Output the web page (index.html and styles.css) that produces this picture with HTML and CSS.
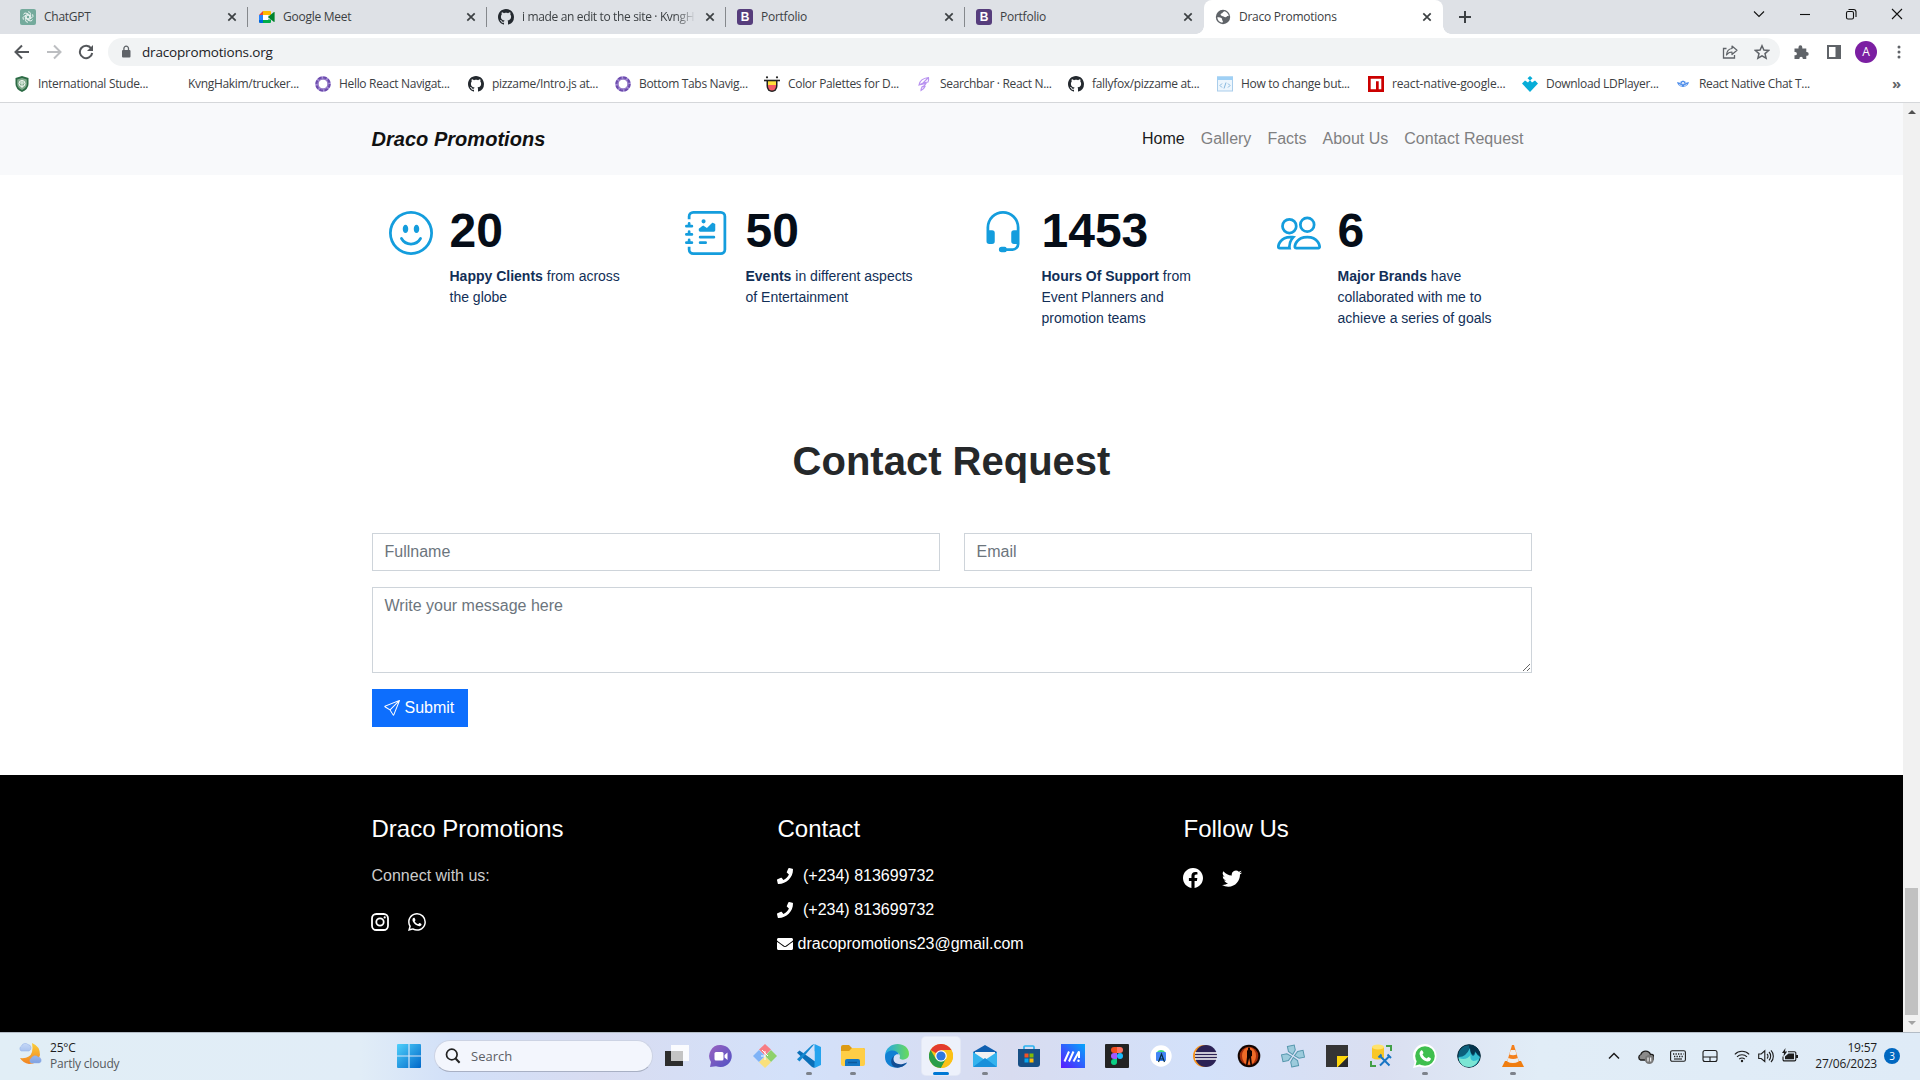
FILE: index.html
```html
<!DOCTYPE html>
<html lang="en">
<head>
<meta charset="utf-8">
<title>Draco Promotions</title>
<link rel="stylesheet" href="styles.css">
</head>
<body>
<svg class="defs" width="0" height="0">
<defs>
<symbol id="github" viewBox="0 0 16 16"><path fill="#24292f" d="M8 0C3.58 0 0 3.58 0 8c0 3.54 2.29 6.53 5.47 7.59.4.07.55-.17.55-.38 0-.19-.01-.82-.01-1.49-2.01.37-2.53-.49-2.69-.94-.09-.23-.48-.94-.82-1.13-.28-.15-.68-.52-.01-.53.63-.01 1.08.58 1.23.82.72 1.21 1.87.87 2.33.66.07-.52.28-.87.51-1.07-1.78-.2-3.64-.89-3.64-3.95 0-.87.31-1.59.82-2.15-.08-.2-.36-1.02.08-2.12 0 0 .67-.21 2.2.82.64-.18 1.32-.27 2-.27.68 0 1.36.09 2 .27 1.53-1.04 2.2-.82 2.2-.82.44 1.1.16 1.92.08 2.12.51.56.82 1.27.82 2.15 0 3.07-1.87 3.75-3.65 3.95.29.25.54.73.54 1.48 0 1.07-.01 1.93-.01 2.2 0 .21.15.46.55.38A8.012 8.012 0 0 0 16 8c0-4.42-3.58-8-8-8z"/></symbol>
<symbol id="x" viewBox="0 0 16 16"><path d="M4.300 4.300l7.400 7.400M11.700 4.300l-7.400 7.400" stroke="#3c4043" stroke-width="1.700"/></symbol>
<symbol id="ring" viewBox="0 0 16 16"><circle cx="8" cy="8" r="6.300" fill="none" stroke="#a58cd6" stroke-width="3"/><circle cx="8" cy="8" r="6.600" fill="none" stroke="#6b4bab" stroke-width="2" stroke-dasharray="3.600 1.580"/><circle cx="8" cy="8" r="4.900" fill="none" stroke="#7b5bb5" stroke-width=".8"/></symbol>
<symbol id="phone" viewBox="0 0 512 512"><path fill="#fff" d="M493.4 24.6l-104-24c-11.3-2.6-22.9 3.3-27.5 13.9l-48 112c-4.2 9.8-1.4 21.3 6.9 28l60.6 49.6c-36 76.7-98.9 140.5-177.2 177.2l-49.6-60.6c-6.8-8.3-18.2-11.1-28-6.9l-112 48C3.9 366.5-2 378.1.6 389.4l24 104C27.1 504.2 36.7 512 48 512c256.1 0 464-207.5 464-464 0-11.2-7.7-20.9-18.6-23.4z"/></symbol>
<symbol id="whatsapp" viewBox="0 0 16 16"><path fill="#fff" d="M13.601 2.326A7.854 7.854 0 0 0 7.994 0C3.627 0 .068 3.558.064 7.926c0 1.399.366 2.76 1.057 3.965L0 16l4.204-1.102a7.933 7.933 0 0 0 3.79.965h.004c4.368 0 7.926-3.558 7.93-7.93A7.898 7.898 0 0 0 13.6 2.326zM7.994 14.521a6.573 6.573 0 0 1-3.356-.92l-.24-.144-2.494.654.666-2.433-.156-.251a6.56 6.56 0 0 1-1.007-3.505c0-3.626 2.957-6.584 6.591-6.584a6.56 6.56 0 0 1 4.66 1.931 6.557 6.557 0 0 1 1.928 4.66c-.004 3.639-2.961 6.592-6.592 6.592zm3.615-4.934c-.197-.099-1.17-.578-1.353-.646-.182-.065-.315-.099-.445.099-.133.197-.513.646-.627.775-.114.133-.232.148-.43.05-.197-.1-.836-.308-1.592-.985-.59-.525-.985-1.175-1.103-1.372-.114-.198-.011-.304.088-.403.087-.088.197-.232.296-.346.1-.114.133-.198.198-.33.065-.134.034-.248-.015-.347-.05-.099-.445-1.076-.612-1.47-.16-.389-.323-.335-.445-.34-.114-.007-.247-.007-.38-.007a.729.729 0 0 0-.529.247c-.182.198-.691.677-.691 1.654 0 .977.71 1.916.81 2.049.098.133 1.394 2.132 3.383 2.992.47.205.84.326 1.129.418.475.152.904.129 1.246.08.38-.058 1.171-.48 1.338-.943.164-.464.164-.86.114-.943-.049-.084-.182-.133-.38-.232z"/></symbol>
</defs>
</svg>

<header class="tabs">
  <div class="tab">
    <svg class="i16" viewBox="0 0 16 16"><rect width="16" height="16" rx="2" fill="#74aa9c"/><g fill="none" stroke="#fff" stroke-width=".8"><path id="petal" d="M8 2.700a2.600 2.600 0 0 1 2.600 2.600v3.200L8 10"/><use href="#petal" transform="rotate(60 8 8)"/><use href="#petal" transform="rotate(120 8 8)"/><use href="#petal" transform="rotate(180 8 8)"/><use href="#petal" transform="rotate(240 8 8)"/><use href="#petal" transform="rotate(300 8 8)"/></g></svg>
    <span class="tab-title">ChatGPT</span><svg class="i16"><use href="#x"/></svg>
  </div>
  <div class="tab">
    <svg class="i16" viewBox="0 0 16 16"><path d="M4 2h7a1 1 0 0 1 1 1v3H4z" fill="#ffba00"/><path d="M4 2v4H0z" fill="#ea4335"/><path d="M0 6h4v5H0z" fill="#2684fc"/><path d="M0 11h4v3H1a1 1 0 0 1-1-1z" fill="#0066da"/><path d="M4 10.500h8V13a1 1 0 0 1-1 1H4z" fill="#00ac47"/><path d="M8.800 8L15 3q.6-.3.6.4v9.200q0 .7-.6.4z" fill="#00832d"/><path d="M4 6h5v5H4z" fill="#fff"/></svg>
    <span class="tab-title">Google Meet</span><svg class="i16"><use href="#x"/></svg>
  </div>
  <div class="tab">
    <svg class="i16"><use href="#github"/></svg>
    <span class="tab-title fade">i made an edit to the site · KvngH</span><svg class="i16"><use href="#x"/></svg>
  </div>
  <div class="tab">
    <span class="boot">B</span>
    <span class="tab-title">Portfolio</span><svg class="i16"><use href="#x"/></svg>
  </div>
  <div class="tab last">
    <span class="boot">B</span>
    <span class="tab-title">Portfolio</span><svg class="i16"><use href="#x"/></svg>
  </div>
  <div class="tab active">
    <svg class="i16" viewBox="0 0 16 16"><circle cx="8" cy="8" r="7.200" fill="#5f6368"/><path d="M2.300 8.200c2 .1 4 .3 4.600 1.300s-.3 1.700.6 2.100c.8.500.4 1.500-.2 2.100A6 6 0 0 1 2.300 8.200zM6.300 4.600c1.300.2 1.300-2 3.300-2.300 2.300.7 3.900 2.700 4.200 5-.8-.3-1.500-.5-2 .3-.6 1-2.300.7-3.200 0C7.900 7 6 7 5.700 6c-.1-.7 0-1.300.6-1.400z" fill="#fff"/></svg>
    <span class="tab-title">Draco Promotions</span><svg class="i16"><use href="#x"/></svg>
  </div>
  <svg class="newtab" viewBox="0 0 14 14"><path d="M7 1v12M1 7h12" stroke="#3c4043" stroke-width="2"/></svg>
  <div class="winbtns">
    <svg viewBox="0 0 12 12"><path d="M1 3.500l5 5 5-5" /></svg>
    <svg viewBox="0 0 12 12"><path d="M1 6.500h10"/></svg>
    <svg viewBox="0 0 12 12"><rect x="1.500" y="3.500" width="7" height="7.500" rx="1.500"/><path d="M3.500 1.500h5a2.500 2.500 0 0 1 2.500 2.500v5"/></svg>
    <svg viewBox="0 0 12 12"><path d="M1 1l10 10M11 1L1 11"/></svg>
  </div>
</header>

<div class="toolbar">
  <div class="navbtns">
    <svg class="i16" viewBox="0 0 16 16"><path d="M15 8H2M8 1.500L1.500 8 8 14.500" fill="none" stroke="#54575b" stroke-width="2"/></svg>
    <svg class="i16" viewBox="0 0 16 16"><path d="M1 8h13M8 1.500L14.500 8 8 14.500" fill="none" stroke="#bcbec1" stroke-width="2"/></svg>
    <svg class="i16" viewBox="0 0 16 16"><path d="M13.200 4.500A6.200 6.200 0 1 0 14.200 9" fill="none" stroke="#54575b" stroke-width="2"/><path d="M15 1v6H9z" fill="#54575b"/></svg>
  </div>
  <div class="omnibox">
    <svg class="lock" viewBox="0 0 10 13"><rect x="1" y="4.500" width="8.500" height="7.500" rx="1" fill="#5f6368"/><path d="M2.900 5V3a2.300 2.300 0 0 1 4.600 0v2" fill="none" stroke="#5f6368" stroke-width="1.300"/></svg>
    <span class="url">dracopromotions.org</span>
    <svg class="i16" viewBox="0 0 16 16"><path d="M4.500 4.500H1.500v9.500h11v-3" fill="none" stroke="#5f6368" stroke-width="1.300"/><path d="M10 2l5 4.300-5 4.200V8Q6.500 8 4.500 11 5 5 10 4.500z" fill="none" stroke="#5f6368" stroke-width="1.200" stroke-linejoin="round"/></svg>
    <svg class="i16" viewBox="0 0 16 16"><path d="M8 1.800l1.900 4.300 4.700.4-3.600 3.100 1.100 4.600L8 11.800l-4.100 2.400L5 9.600 1.400 6.500l4.700-.4z" fill="none" stroke="#5f6368" stroke-width="1.500"/></svg>
  </div>
  <div class="actions">
    <svg class="i16" viewBox="0 0 16 16"><path d="M1.500 4.500h4V3.200a1.900 1.900 0 0 1 3.800 0v1.300h4V8h.5a1.900 1.900 0 0 1 0 3.800h-.5V15H9.800v-.6a1.700 1.700 0 0 0-3.400 0v.6H1.500v-3.700h.8a1.600 1.600 0 0 0 0-3.200h-.8z" fill="#5f6368"/></svg>
    <svg class="i16" viewBox="0 0 16 16"><path fill-rule="evenodd" d="M1 1h14v14H1zM3 3v10h6.500V3z" fill="#5f6368"/></svg>
    <span class="avatar">A</span>
    <svg class="i16" viewBox="0 0 16 16"><g fill="#5f6368"><circle cx="8" cy="3" r="1.500"/><circle cx="8" cy="8" r="1.500"/><circle cx="8" cy="13" r="1.500"/></g></svg>
  </div>
</div>

<nav class="bookmarks">
  <a class="bm"><svg class="i16" viewBox="0 0 16 16"><path d="M8 0l6.500 2v6q0 5-6.500 8-6.500-3-6.500-8V2z" fill="#2c6b45"/><path d="M8 2l4.800 1.500V8q0 3.700-4.800 6-4.800-2.300-4.800-6V3.500z" fill="#7fa98a"/><circle cx="8" cy="7.500" r="3" fill="none" stroke="#fff"/><path d="M8 4v8M6 7h4" stroke="#e6f1e8"/></svg><span>International Stude...</span></a>
  <a class="bm"><i class="i16"></i><span>KvngHakim/trucker...</span></a>
  <a class="bm"><svg class="i16"><use href="#ring"/></svg><span>Hello React Navigat...</span></a>
  <a class="bm"><svg class="i16"><use href="#github"/></svg><span>pizzame/Intro.js at...</span></a>
  <a class="bm"><svg class="i16"><use href="#ring"/></svg><span>Bottom Tabs Navig...</span></a>
  <a class="bm"><svg class="i16" viewBox="0 0 16 16"><path d="M2.500 4h11v6a5.500 6 0 0 1-11 0z" fill="#222"/><path d="M4 5h8v4H4z" fill="#ffe03a"/><path d="M4 9h8v1a4 4.500 0 0 1-8 0z" fill="#f35b64"/><path d="M0 4.500h16" stroke="#222" stroke-width="1.600"/><circle cx="3" cy="1.300" r="1.100" fill="#222"/><circle cx="13" cy="1.300" r="1.100" fill="#222"/></svg><span>Color Palettes for D...</span></a>
  <a class="bm"><svg class="i16" viewBox="0 0 16 16"><path d="M12.500 1.500Q4 2.500 3 9l4-2 5-1q1-2 .5-4.500zM3 9l7-1.500q-1 2.500-4.500 3.500M6 11l3-.5Q8 13 5 14.500q0-2 1-3.500zM7 7l5-5" fill="none" stroke="#b892f0" stroke-width="1.100"/></svg><span>Searchbar · React N...</span></a>
  <a class="bm"><svg class="i16"><use href="#github"/></svg><span>fallyfox/pizzame at...</span></a>
  <a class="bm"><svg class="i16" viewBox="0 0 16 16"><rect x=".5" y="1" width="15" height="14" fill="#edf6fd" stroke="#a9cdeb"/><path d="M0 .5h16V4H0z" fill="#9fd0f5"/><path d="M5 7.500L3 9.500l2 2M11 7.500l2 2-2 2M9 6.500l-2 6" fill="none" stroke="#85b7dd"/></svg><span>How to change but...</span></a>
  <a class="bm wide"><svg class="i16" viewBox="0 0 16 16"><path d="M0 0h16v16H0z" fill="#cb0000"/><path d="M2.700 2.700h10.600v10.600H10.700v-8H8v8H2.700z" fill="#fff"/></svg><span>react-native-google...</span></a>
  <a class="bm"><svg class="i16" viewBox="0 0 16 16"><path d="M8 0l2.500 2.300L8 4.600 5.500 2.300zM8 4l2 2.500 3-2 3 3L8 16 0 7.500l3-3 3 2z" fill="#07add8"/></svg><span>Download LDPlayer...</span></a>
  <a class="bm"><svg class="i16" viewBox="0 0 16 16"><path d="M2 6q3 0 6 3 3-3 6-3-1 4.500-6 5Q3 10.500 2 6zM5 6l3-1.500L11 6 8 9z" fill="#4d8dea"/><circle cx="8" cy="7" r="1" fill="#fff"/><path d="M4 8.500l3 1.500M12 8.500L9 10" stroke="#fff" stroke-width=".7"/></svg><span>React Native Chat T...</span></a>
  <b class="more">»</b>
</nav>

<div class="viewport">
  <div class="page">
    <nav class="site-nav">
      <div class="wrap nav-row">
        <a class="brand">Draco Promotions</a>
        <div class="links"><a class="on">Home</a><a>Gallery</a><a>Facts</a><a>About Us</a><a>Contact Request</a></div>
      </div>
    </nav>
    <section class="counts">
      <div class="count"><svg viewBox="0 0 16 16"><path d="M8 15A7 7 0 1 1 8 1a7 7 0 0 1 0 14zm0 1A8 8 0 1 0 8 0a8 8 0 0 0 0 16z"/><path d="M4.285 9.567a.5.5 0 0 1 .683.183A3.498 3.498 0 0 0 8 11.500a3.498 3.498 0 0 0 3.032-1.750.5.5 0 1 1 .866.5A4.498 4.498 0 0 1 8 12.500a4.498 4.498 0 0 1-3.898-2.250.5.5 0 0 1 .183-.683zM7 6.500C7 7.328 6.552 8 6 8s-1-.672-1-1.500S5.448 5 6 5s1 .672 1 1.500zm4 0c0 .828-.448 1.500-1 1.500s-1-.672-1-1.500S9.448 5 10 5s1 .672 1 1.500z"/></svg><div><strong class="num">20</strong><p><b>Happy Clients</b> from across the globe</p></div></div>
      <div class="count"><svg viewBox="0 0 16 16"><path d="M7.500 3.750a.75.75 0 1 1-1.500 0 .75.75 0 0 1 1.500 0zm-.861 1.542 1.330.886 1.854-1.855a.25.25 0 0 1 .289-.047L11 4.750V7a.5.5 0 0 1-.5.5h-5A.5.5 0 0 1 5 7v-.5s1.540-1.274 1.639-1.208zM5 9.500a.5.5 0 0 1 .5-.5h5a.5.5 0 0 1 0 1h-5a.5.5 0 0 1-.5-.5zm0 2a.5.5 0 0 1 .5-.5h2a.5.5 0 0 1 0 1h-2a.5.5 0 0 1-.5-.5z"/><path d="M3 0h10a2 2 0 0 1 2 2v12a2 2 0 0 1-2 2H3a2 2 0 0 1-2-2v-1h1v1a1 1 0 0 0 1 1h10a1 1 0 0 0 1-1V2a1 1 0 0 0-1-1H3a1 1 0 0 0-1 1v1H1V2a2 2 0 0 1 2-2z"/><path d="M1 5v-.5a.5.5 0 0 1 1 0V5h.5a.5.5 0 0 1 0 1h-2a.5.5 0 0 1 0-1H1zm0 3v-.5a.5.5 0 0 1 1 0V8h.5a.5.5 0 0 1 0 1h-2a.5.5 0 0 1 0-1H1zm0 3v-.5a.5.5 0 0 1 1 0v.5h.5a.5.5 0 0 1 0 1h-2a.5.5 0 0 1 0-1H1z"/></svg><div><strong class="num">50</strong><p><b>Events</b> in different aspects of Entertainment</p></div></div>
      <div class="count"><svg viewBox="0 0 16 16"><path d="M8 1a5 5 0 0 0-5 5v1h1a1 1 0 0 1 1 1v3a1 1 0 0 1-1 1H3a1 1 0 0 1-1-1V6a6 6 0 1 1 12 0v6a2.500 2.500 0 0 1-2.500 2.500H9.366a1 1 0 0 1-.866.5h-1a1 1 0 1 1 0-2h1a1 1 0 0 1 .866.5H11.500A1.500 1.500 0 0 0 13 12h-1a1 1 0 0 1-1-1V8a1 1 0 0 1 1-1h1V6a5 5 0 0 0-5-5z"/></svg><div><strong class="num">1453</strong><p><b>Hours Of Support</b> from Event Planners and promotion teams</p></div></div>
      <div class="count"><svg viewBox="0 0 16 16"><path d="M15 14s1 0 1-1-1-4-5-4-5 3-5 4 1 1 1 1h8zm-7.978-1A.261.261 0 0 1 7 12.996c.001-.264.167-1.030.76-1.720C8.312 10.629 9.282 10 11 10c1.717 0 2.687.63 3.240 1.276.593.69.758 1.457.76 1.720l-.008.002a.274.274 0 0 1-.014.002H7.022zM11 7a2 2 0 1 0 0-4 2 2 0 0 0 0 4zm3-2a3 3 0 1 1-6 0 3 3 0 0 1 6 0zM6.936 9.280a5.880 5.880 0 0 0-1.230-.247A7.350 7.350 0 0 0 5 9c-4 0-5 3-5 4 0 .667.333 1 1 1h4.216A2.238 2.238 0 0 1 5 13c0-1.010.377-2.042 1.090-2.904.243-.294.526-.569.846-.816zM4.920 10A5.493 5.493 0 0 0 4 13H1c0-.26.164-1.030.76-1.724.545-.636 1.492-1.256 3.160-1.275zM1.500 5.500a3 3 0 1 1 6 0 3 3 0 0 1-6 0zm3-2a2 2 0 1 0 0 4 2 2 0 0 0 0-4z"/></svg><div><strong class="num">6</strong><p><b>Major Brands</b> have collaborated with me to achieve a series of goals</p></div></div>
    </section>
    <section class="contact wrap">
      <h2>Contact Request</h2>
      <form class="form">
        <div class="pair"><input placeholder="Fullname"><input placeholder="Email"></div>
        <textarea placeholder="Write your message here"></textarea>
        <button type="button" class="submit"><svg class="i16" viewBox="0 0 16 16"><path fill="#fff" d="M15.854.146a.5.5 0 0 1 .11.54l-5.819 14.547a.75.75 0 0 1-1.329.124l-3.178-4.995L.643 7.184a.75.75 0 0 1 .124-1.330L15.314.037a.5.5 0 0 1 .54.11ZM6.636 10.070l2.761 4.338L14.130 2.576 6.636 10.070Zm6.787-8.201L1.591 6.602l4.339 2.760 7.494-7.493Z"/></svg><span>Submit</span></button>
      </form>
    </section>
    <footer class="foot">
      <div class="wrap foot-cols">
        <div><h4>Draco Promotions</h4><p class="muted">Connect with us:</p>
          <div class="social left"><svg viewBox="0 0 18 18"><rect x="1" y="1" width="16" height="16" rx="4.300" fill="none" stroke="#fff" stroke-width="1.800"/><circle cx="9" cy="9" r="3.700" fill="none" stroke="#fff" stroke-width="1.800"/><circle cx="13.700" cy="4.400" r="1.100" fill="#fff"/></svg><svg><use href="#whatsapp"/></svg></div>
        </div>
        <div><h4>Contact</h4>
          <p class="line"><svg class="i16"><use href="#phone"/></svg><span class="tel">(+234) 813699732</span></p>
          <p class="line"><svg class="i16"><use href="#phone"/></svg><span class="tel">(+234) 813699732</span></p>
          <p class="line"><svg class="i16" viewBox="0 0 512 512"><path fill="#fff" d="M502.300 190.800c3.900-3.100 9.700-.2 9.700 4.700V400c0 26.500-21.500 48-48 48H48c-26.500 0-48-21.500-48-48V195.600c0-5 5.700-7.800 9.700-4.700 22.400 17.400 52.100 39.500 154.100 113.600 21.100 15.400 56.700 47.800 92.200 47.600 35.700.3 72-32.800 92.300-47.600 102-74.100 131.600-96.300 154-113.700zM256 320c23.200.4 56.600-29.200 73.400-41.400 132.700-96.300 142.800-104.700 173.400-128.700 5.800-4.500 9.200-11.500 9.200-18.900v-19c0-26.500-21.500-48-48-48H48c-26.500 0-48 21.500-48 48v19c0 7.400 3.400 14.300 9.200 18.900 30.600 23.900 40.700 32.400 173.400 128.700 16.800 12.200 50.200 41.800 73.400 41.400z"/></svg><span class="mail">dracopromotions23@gmail.com</span></p>
        </div>
        <div><h4>Follow Us</h4>
          <div class="social right"><svg viewBox="0 0 16 16"><path fill="#fff" d="M16 8.049c0-4.446-3.582-8.050-8-8.050C3.580 0-.002 3.603-.002 8.050c0 4.017 2.926 7.347 6.750 7.951v-5.625h-2.030V8.050H6.750V6.275c0-2.017 1.195-3.131 3.022-3.131.876 0 1.791.157 1.791.157v1.980h-1.009c-.993 0-1.303.621-1.303 1.258v1.510h2.218l-.354 2.326H9.250V16c3.824-.604 6.750-3.934 6.750-7.951z"/></svg><svg viewBox="0 0 16 16"><path fill="#fff" d="M5.026 15c6.038 0 9.341-5.003 9.341-9.334 0-.14 0-.282-.006-.422A6.685 6.685 0 0 0 16 3.542a6.658 6.658 0 0 1-1.889.518 3.301 3.301 0 0 0 1.447-1.817 6.533 6.533 0 0 1-2.087.793A3.286 3.286 0 0 0 7.875 6.030a9.325 9.325 0 0 1-6.767-3.429 3.289 3.289 0 0 0 1.018 4.382A3.323 3.323 0 0 1 .64 6.575v.045a3.288 3.288 0 0 0 2.632 3.218 3.203 3.203 0 0 1-.865.115 3.230 3.230 0 0 1-.614-.057 3.283 3.283 0 0 0 3.067 2.277A6.588 6.588 0 0 1 .78 13.580a6.320 6.320 0 0 1-.78-.045A9.344 9.344 0 0 0 5.026 15z"/></svg></div>
        </div>
      </div>
    </footer>
  </div>
  <div class="scrollbar"><i class="up"></i><i class="thumb"></i><i class="down"></i></div>
</div>

<div class="taskbar">
  <div class="weather">
    <svg viewBox="0 0 24 24"><defs><linearGradient id="moon" x2="0" y2="1"><stop stop-color="#fbcf3a"/><stop offset="1" stop-color="#f28322"/></linearGradient><linearGradient id="cl" x2="0" y2="1"><stop stop-color="#c5d8f7"/><stop offset="1" stop-color="#7fa2e2"/></linearGradient></defs><path d="M14 2q8 3 8 12-2 9-11 9-6-1-9-6 10 1 12-6 1-4 0-9z" fill="url(#moon)"/><path d="M3 10a3 3 0 0 1 .5-5A4 4 0 0 1 10 3.500a3.400 3.400 0 0 1 1 6.500zM13 22a3 3 0 0 1 .5-5A4 4 0 0 1 20 16a3.200 3.200 0 0 1 1.500 6z" fill="url(#cl)" stroke="#8fade6" stroke-width=".5"/></svg>
    <div><span class="temp">25°C</span><span class="cond">Partly cloudy</span></div>
  </div>
  <div class="apps">
    <svg class="start" viewBox="0 0 24 24"><defs><linearGradient id="win" x2="1" y2="1"><stop stop-color="#4fd0fb"/><stop offset="1" stop-color="#0067c9"/></linearGradient></defs><path d="M0 1a1 1 0 0 1 1-1h10.400v11.400H0zM12.600 0H23a1 1 0 0 1 1 1v10.400H12.600zM0 12.600h11.400V24H1a1 1 0 0 1-1-1zM12.600 12.600H24V23a1 1 0 0 1-1 1H12.600z" fill="url(#win)"/></svg>
    <div class="search"><svg viewBox="0 0 16 16"><circle cx="6.800" cy="6.500" r="5.300" fill="none" stroke="#222" stroke-width="1.700"/><path d="M10.600 10.500l4 4.300" stroke="#222" stroke-width="2"/></svg><span>Search</span></div>
    <span class="app"><svg viewBox="0 0 24 24"><path d="M0 7h18v15H0z" fill="#2d2d2d"/><path d="M6 1h18v16H6z" fill="#fff" fill-opacity=".88"/><path d="M6 7h12v10H6z" fill="#c4c4c4"/></svg></span>
    <span class="app"><svg viewBox="0 0 24 24"><defs><linearGradient id="chat" x2="1" y2="1"><stop stop-color="#9b62c0"/><stop offset="1" stop-color="#4f52c4"/></linearGradient></defs><path d="M12 1a11.500 11 0 1 1-5 21.200L1 23l1-5A11 11 0 0 1 12 1z" fill="url(#chat)"/><rect x="5.500" y="8" width="9" height="8.500" rx="1.500" fill="#fff"/><path d="M15.500 11l3-2.500v7.500l-3-2.500z" fill="#fff"/></svg></span>
    <span class="app"><svg viewBox="0 0 24 24"><g stroke="#fff" stroke-width="1"><path d="M12 0l6 5.500-6 6-6-6z" fill="#f77c83" stroke="none"/><path d="M6 6l6 6-6 6-6-6z" fill="#7fb3f7" stroke="none"/><path d="M18 6l6 6-6 6-6-6z" fill="#8fd16b" stroke="none"/><path d="M12 12.500l6 5.700-6 5.800-6-5.800z" fill="#f9e07c" stroke="none"/><path d="M9 6l6 6M12 7v9M8 12h4" fill="none"/></g></svg></span>
    <span class="app run"><svg viewBox="0 0 24 24"><path d="M2.500 6.500L0 8.800 15 23l2.500 1 1.500-6z" fill="#0a6fb8"/><path d="M17.500 0L2.500 17.500 0 15.200 15 1z" fill="#1488d0"/><path d="M17.500 0L24 3v18l-6.500 3z" fill="#25a3ee"/><path d="M17.500 7v10L11.500 12z" fill="#d3dff7"/></svg></span>
    <span class="app run"><svg viewBox="0 0 24 24"><path d="M0 3a2 2 0 0 1 2-2h6l3 3h11a2 2 0 0 1 2 2v4H0z" fill="#dd9b14"/><path d="M0 7h8l3-3h11a2 2 0 0 1 2 2v14a2 2 0 0 1-2 2H2a2 2 0 0 1-2-2z" fill="#ffce46"/><path d="M4 22v-5a2 2 0 0 1 2-2h11a2 2 0 0 1 2 2v5z" fill="#1477c4"/><path d="M7 18.500h9" stroke="#0c5a9c" stroke-width="1.500"/></svg></span>
    <span class="app"><svg viewBox="0 0 24 24"><defs><linearGradient id="edge"><stop stop-color="#22a5ea"/><stop offset="1" stop-color="#69dc58"/></linearGradient></defs><path d="M0 12C1-4 24-3 24 10c0 6-8 7-9.500 4C17 9 9 6 4 10z" fill="url(#edge)"/><path d="M0 13C0 6 11 4 14 10.500 10 9 7 14 9 18s8 4 13 .5C18 26 0 26 0 13z" fill="#1180d3"/><path d="M9 12c-3 6 4 11 13 6.500C18 24 11 25 8 22c-3-3-2-8 1-10z" fill="#114d94"/></svg></span>
    <span class="app current"><svg viewBox="0 0 24 24"><circle cx="12" cy="12" r="12" fill="#fbc116"/><path d="M12 12L1.600 6A12 12 0 0 1 22.400 6z" fill="#e33b2e"/><path d="M1.600 6A12 12 0 0 0 12 24l5-9H7z" fill="#2a9d4a"/><path d="M22.400 6H12l5 9-5 9A12 12 0 0 0 22.400 6z" fill="#fbc116"/><circle cx="12" cy="12" r="5.800" fill="#fff"/><circle cx="12" cy="12" r="4.600" fill="#2f78e0"/></svg></span>
    <span class="app run"><svg viewBox="0 0 24 24"><path d="M0 8l12-7 12 7v3H0z" fill="#0f5fb0"/><path d="M2 8h20v8H2z" fill="#f2f2f2"/><path d="M0 8l12 8L24 8v14a1 1 0 0 1-1 1H1a1 1 0 0 1-1-1z" fill="#34b3ee"/><path d="M0 23L12 14l12 9z" fill="#1890da"/></svg></span>
    <span class="app"><svg viewBox="0 0 24 24"><path d="M7 6V3q0-1 1-1h8q1 0 1 1v3" fill="none" stroke="#2bb2ef" stroke-width="1.700"/><path d="M1 5h22v15a3 3 0 0 1-3 3H4a3 3 0 0 1-3-3z" fill="#174f85"/><path d="M7.500 9.500h4v4h-4z" fill="#f35325"/><path d="M12.500 9.500h4v4h-4z" fill="#81bc06"/><path d="M7.500 14.500h4v4h-4z" fill="#05a6f0"/><path d="M12.500 14.500h4v4h-4z" fill="#ffba08"/></svg></span>
    <span class="app"><svg viewBox="0 0 24 24"><defs><linearGradient id="ma" x1="0" y1="1" x2="1" y2="0"><stop stop-color="#5a18ff"/><stop offset="1" stop-color="#05a6fb"/></linearGradient></defs><path d="M0 0h24v24H0z" fill="url(#ma)"/><path d="M3.500 17.500l4.500-10M8 17.500l4.500-10M12.500 17.500L18 7.500v6.500" fill="none" stroke="#fff" stroke-width="2"/><circle cx="17.500" cy="16.800" r="1.200" fill="#fff"/></svg></span>
    <span class="app"><svg viewBox="0 0 24 24"><rect width="24" height="24" rx="1" fill="#232323"/><path d="M12 3H9a3 3 0 0 0 0 6h3z" fill="#f24e1e"/><path d="M12 3h3a3 3 0 0 1 0 6h-3z" fill="#ff7262"/><path d="M12 9H9a3 3 0 0 0 0 6h3z" fill="#a259ff"/><circle cx="15" cy="12" r="3" fill="#1abcfe"/><path d="M12 15H9a3 3 0 1 0 3 3z" fill="#0acf83"/></svg></span>
    <span class="app"><svg viewBox="0 0 24 24"><circle cx="12" cy="12" r="10.700" fill="#fff"/><path d="M8 8a4.500 3.500 0 0 1 8 0z" fill="#3ddc84"/><rect x="7" y="8" width="10" height="9" rx="1" fill="#4285f4"/><path d="M9.500 18l3-8 3 8M10.500 15h4" fill="none" stroke="#073042" stroke-width="1.200"/></svg></span>
    <span class="app"><svg viewBox="0 0 24 24"><circle cx="11" cy="12" r="11" fill="#f7941e"/><circle cx="13" cy="12" r="11" fill="#2c2255"/><path d="M2 9h22M2 12h22M2 15h22" stroke="#fff" stroke-width="1.300"/></svg></span>
    <span class="app"><svg viewBox="0 0 24 24"><circle cx="12" cy="12" r="11.300" fill="#120501"/><circle cx="12" cy="12" r="9.300" fill="#a52e0c"/><ellipse cx="12" cy="12" rx="7" ry="8.800" fill="#ef6b27"/><path d="M11 3.500h2v2l2 1.500v5l-1 .5 1 8.500h-1.500l-1.300-7-1.700 7H9l1-8V7l1-1.500z" fill="#140400"/></svg></span>
    <span class="app"><svg viewBox="0 0 24 24"><g fill="#9ccbdc" stroke="#5597ad" stroke-width="1" transform="rotate(-12 12 12)"><path d="M8.500 1.500h7v5L12 10.500 8.500 6.500zM8.500 22.500h7v-5L12 13.500l-3.500 4zM1 8.500v7h5.500l4-3.500-4-3.500zM23 8.500v7h-5.500l-4-3.500 4-3.500z"/></g></svg></span>
    <span class="app"><svg viewBox="0 0 24 24"><path d="M1 1h22v22H1z" fill="#353535"/><path d="M12 12h11v1L13 23h-1z" fill="#ffd60a"/><path d="M23 13v10H13z" fill="#2a2a2a"/></svg></span>
    <span class="app"><svg viewBox="0 0 24 24"><path d="M17 2h5v5M2 17v5h5" fill="none" stroke="#43a047" stroke-width="2"/><path d="M3 3v11q5 3 12 0V3z" fill="#f9c726"/><ellipse cx="9" cy="3" rx="6" ry="2.500" fill="#ffe26b"/><path d="M11 12l9.500 9.500M20.500 12L11 21.500" stroke="#1976c5" stroke-width="2"/><path d="M9.500 13.500l3-3M18.500 10.500l3.500 3.500" stroke="#1976c5" stroke-width="2"/></svg></span>
    <span class="app run"><svg viewBox="0 0 24 24"><path d="M12 0a11.800 11.800 0 1 1-5.500 22.400L0 24l1.700-6A11.800 11.800 0 0 1 12 0z" fill="#fff"/><circle cx="12" cy="12" r="9.800" fill="#3fbf4e"/><path d="M2.500 21.500L4 16l4 4z" fill="#3fbf4e"/><path d="M8 6.500c1-.7 1.700 0 2.500 2.500l-1 1.500q1.300 2.800 4.200 4l1.500-1.500q3 1 2.800 2-1 3-4 2.500Q8 16 6.500 10q0-2.500 1.500-3.500z" fill="#fff"/></svg></span>
    <span class="app"><svg viewBox="0 0 24 24"><circle cx="12" cy="12" r="11.300" fill="#0a5f7c" stroke="#062433"/><path d="M12 1a11 11 0 0 1 11 11q-3-1-5-5 0 2-2 4-4-3-4-10z" fill="#04344c"/><path d="M2 13Q9 13 13 4q0 6 3 8 2-1 2.500-4 2 4 4.500 5-2 9-10 10Q3 22 1.500 13z" fill="#35bdd0"/><path d="M1.500 14q8 3 12-3-1 5 3 6 3 0 5-2-3 8-9.500 8-9 0-10.500-9z" fill="#7be6d4"/></svg></span>
    <span class="app run"><svg viewBox="0 0 24 24"><path d="M4 17h16l3 6H1z" fill="#ef7d0f"/><path d="M11 1h2l5 17q-6 3-12 0z" fill="#f4811c"/><path d="M9.700 6h4.600l1.300 4.500q-3.500 1.500-7.200 0zM7.300 14q5 2 9.400 0l1 3.500q-6 3-11.500 0z" fill="#eee"/></svg></span>
  </div>
  <div class="tray">
    <svg viewBox="0 0 16 16"><path d="M3 10.500L8 5.500l5 5" stroke-width="1.500"/></svg>
    <svg viewBox="0 0 16 16"><path d="M2.500 12a3 3 0 0 1 .3-5.500A5.200 5.200 0 0 1 12.500 6.500 2.800 2.800 0 0 1 14 12z" fill="#8b8b8b" stroke="#1d1d1d" stroke-width="1.300"/><circle cx="11.300" cy="11.500" r="4.500" fill="#777" stroke="none"/><path d="M10 9.500v4M12.700 9.500v4" stroke="#fff"/></svg>
    <svg viewBox="0 0 16 16"><rect x=".6" y="2.800" width="14.800" height="10.400" rx="1.500"/><path d="M3 6h10.500M4 8.500h9" stroke-dasharray="1.300 1.200" stroke-width="1.400"/><path d="M4 11h8"/></svg>
    <svg viewBox="0 0 16 16"><rect x="1" y="2.500" width="14" height="11" rx="2"/><path d="M1 9h14M8 9v4.500"/></svg>
    <svg viewBox="0 0 16 16"><path d="M.8 6.300a10.200 10.200 0 0 1 14.400 0M3 8.800a7.100 7.100 0 0 1 10 0M5.200 11.200a4 4 0 0 1 5.600 0"/><circle cx="8" cy="13" r="1.200" fill="#1d1d1d" stroke="none"/></svg>
    <svg viewBox="0 0 16 16"><path d="M.7 6v4.500h2.500L6.800 13.500V2.800L3.200 6z"/><path d="M9 6a3 3 0 0 1 0 4.500M11 4a6 6 0 0 1 0 8.300M13 2.300a8.500 8.500 0 0 1 0 11.700"/></svg>
    <svg viewBox="0 0 16 16"><path d="M6 3.800h6.500a1.300 1.300 0 0 1 1.300 1.300v6.500a1.300 1.300 0 0 1-1.300 1.300H2.300A1.300 1.300 0 0 1 1 11.600V8.500"/><path d="M6.500 5.500H12v5.800H3V8.500z" fill="#1d1d1d" stroke="none"/><path d="M14 7h2v3h-2zM3.500 0L0 5h2l-.5 3.500L5.200 3.500H3z" fill="#1d1d1d" stroke="none"/></svg>
  </div>
  <div class="clock"><span>19:57</span><span>27/06/2023</span></div>
  <span class="badge">3</span>
</div>
</body>
</html>
```
FILE: styles.css
```css
* { box-sizing: border-box; }
body { margin: 0; width: 1920px; height: 1080px; overflow: hidden; display: flex; flex-direction: column; background: #fff; font-family: "Open Sans", "Noto Sans", sans-serif; color: #3c4043; }
svg { display: block; flex: none; }
.defs { position: absolute; }
.i16 { width: 16px; height: 16px; flex: none; }

/* browser tab strip */
.tabs { flex: none; height: 34px; background: #dee1e6; display: flex; align-items: center; padding-left: 9px; }
.tab { width: 239px; height: 34px; display: flex; align-items: center; padding: 0 8px 0 11px; font-size: 12px; letter-spacing: -0.25px; position: relative; }
.tab-title { flex: 1; margin: 0 6px 1px 8px; white-space: nowrap; overflow: hidden; }
.fade { letter-spacing: -0.35px; -webkit-mask-image: linear-gradient(90deg, #000 88%, transparent); mask-image: linear-gradient(90deg, #000 88%, transparent); }
.tab:not(.active):not(.last)::after { content: ""; position: absolute; right: 0; top: 7px; width: 1px; height: 20px; background: #85888c; }
.boot { width: 16px; height: 16px; flex: none; border-radius: 3px; background: #563d7c; color: #fff; font: bold 12px/16px "Liberation Sans", sans-serif; text-align: center; letter-spacing: 0; }
.active { background: #fff; border-radius: 8px 8px 0 0; }
.active::before, .active::after { content: ""; position: absolute; bottom: 0; width: 8px; height: 8px; }
.active::before { left: -8px; background: radial-gradient(circle at 0 0, transparent 7.500px, #fff 8px); }
.active::after { right: -8px; background: radial-gradient(circle at 100% 0, transparent 7.500px, #fff 8px); }
.newtab { width: 14px; height: 14px; margin-left: 15px; }
.winbtns { margin-left: auto; display: flex; gap: 34px; padding: 0 17px 6px 0; }
.winbtns svg { width: 12px; height: 12px; fill: none; stroke: #111; stroke-width: 1.100; }

/* address bar */
.toolbar { flex: none; height: 35px; display: flex; align-items: center; }
.navbtns { width: 108px; display: flex; gap: 16px; padding-left: 14px; }
.omnibox { width: 1672px; height: 28px; border-radius: 14px; background: #f1f3f4; display: flex; align-items: center; padding: 0 10px 0 13px; gap: 16px; }
.lock { width: 10px; height: 14px; }
.url { flex: 1; margin-left: -5px; font-size: 13.500px; letter-spacing: -0.17px; color: #202124; }
.actions { display: flex; align-items: center; gap: 14px; padding-left: 13px; flex: 1; }
.actions svg:nth-child(1) { margin-right: 3px; }
.actions svg:nth-child(2) { margin-right: -1px; }
.avatar { width: 22px; height: 22px; border-radius: 50%; background: #7b1fa2; color: #fff; font-size: 12px; line-height: 22px; text-align: center; }

.bookmarks { flex: none; height: 34px; border-bottom: 1px solid #d5d7da; padding: 0 0 3px 14px; display: grid; align-items: center; grid-template-columns: 150px 151px 153px 147px 149px 152px 152px 149px 151px 154px 153px 212px 1fr; }
.bm { display: flex; align-items: center; gap: 8px; font-size: 12px; letter-spacing: -0.32px; white-space: nowrap; }
.bm span { margin-bottom: 1px; }
.wide { letter-spacing: -0.15px; }
.more { font-size: 15px; color: #5f6368; line-height: 16px; margin: -2px 0 0 5px; }

/* web page */
.viewport { flex: 1; display: flex; min-height: 0; }
.page { width: 1903px; display: flex; flex-direction: column; font-family: "Liberation Sans", Arial, sans-serif; color: #212529; }
.wrap { width: 1160px; margin: 0 auto; }
.site-nav { height: 72px; background: #f8f9fb; }
.nav-row { height: 72px; display: flex; align-items: center; justify-content: space-between; }
.brand { font-size: 20px; font-weight: bold; font-style: italic; color: #111; letter-spacing: 0.03px; }
.links { display: flex; font-size: 16px; color: #7f8081; }
.links a { padding: 0 8px; }
.links .on { color: #1b1c1d; }

.counts { width: 1184px; margin: 0 auto; height: 217px; padding-top: 31px; display: grid; grid-template-columns: repeat(4, 296px); }
.count { display: flex; align-items: flex-start; gap: 17px; padding-left: 29px; }
.count svg { width: 44px; height: 44px; margin-top: 5px; fill: #149ddd; }
.count div { width: 176px; }
.num { display: block; font-size: 48px; line-height: 48px; color: #050d18; padding-top: 1px; }
.count p { margin: 11px 0 0; font-size: 14px; line-height: 21px; color: #122f57; }

.contact { padding-top: 45px; height: 383px; }
.contact h2 { margin: 0; text-align: center; font-size: 40px; line-height: 48px; font-weight: bold; color: #25282a; }
.form { display: flex; flex-direction: column; gap: 16px; align-items: flex-start; padding-top: 48px; }
.pair { display: flex; gap: 24px; width: 100%; }
.form input, .form textarea { font: 16px/24px "Liberation Sans", Arial, sans-serif; border: 1px solid #ced4da; padding: 6px 12px; outline: none; border-radius: 0; margin: 0; width: 100%; display: block; }
.form input { height: 38px; }
.form textarea { height: 86px; }
.form ::placeholder { color: #6c757d; opacity: 1; }
.submit { width: 96px; height: 38px; border: 0; background: #0d6efd; color: #fff; font: 16px "Liberation Sans", Arial, sans-serif; display: flex; align-items: center; gap: 5px; padding: 0 0 0 12px; }

.foot { flex: 1; background: #000; color: #fff; padding-top: 39px; }
.foot-cols { display: grid; grid-template-columns: 406px 406px 1fr; font-size: 16px; }
.foot h4 { margin: 0 0 21px; font-size: 24px; line-height: 29px; font-weight: normal; }
.foot p { margin: 0 0 10px; line-height: 24px; height: 24px; }
.muted { color: #ccc; }
.line { display: flex; align-items: center; }
.line svg { margin-left: -0.5px; }
.tel { margin-left: 10px; }
.mail { margin-left: 4.500px; }
.social { display: flex; }
.social.left { gap: 19px; padding-top: 15px; margin-left: -0.5px; }
.social.left svg { width: 18px; height: 18px; }
.social.right { gap: 19px; padding-top: 4px; margin-left: -0.5px; }
.social.right svg { width: 20px; height: 20px; }

.scrollbar { width: 17px; background: #f1f1f1; display: flex; flex-direction: column; align-items: center; }
.scrollbar i { display: block; }
.up { margin-top: 7px; border: 4px solid transparent; border-top: 0; border-bottom: 4px solid #505050; }
.thumb { width: 13px; height: 127px; background: #c1c1c1; margin-top: auto; }
.down { margin: 6px 0 7px; border: 4px solid transparent; border-bottom: 0; border-top: 4px solid #a3a3a3; }

/* desktop taskbar */
.taskbar { flex: none; height: 48px; padding-bottom: 1px; border-top: 1px solid #b3bcc6; display: flex; align-items: center; color: #1d1d1d; font-size: 12px; background: linear-gradient(90deg, #e1eef6 0, #e1edf7 360px, #d2e0f8 450px, #d8dcf1 600px, #d3e1fa 790px, #d8dcf0 1010px, #d3e1fa 1200px, #dadff1 1380px, #e1edf7 1540px, #dfebf7 1920px); }
.weather { width: 378px; padding-left: 18px; display: flex; align-items: center; gap: 8px; }
.weather svg { width: 24px; height: 26px; margin-top: -6px; }
.weather span { display: block; line-height: 16px; letter-spacing: -0.2px; }
.weather .cond { color: #55595d; }
.apps { display: flex; align-items: center; }
.start { width: 24px; height: 24px; margin: 0 13px 0 19px; }
.search { width: 219px; height: 32px; border-radius: 16px; background: #f3f6fd; border: 1px solid #ccd3e4; border-bottom-color: #a8b0c4; display: flex; align-items: center; gap: 10px; padding-left: 10px; font-size: 13px; color: #5c6066; margin-right: 2px; }
.search svg { width: 16px; height: 16px; }
.search span { margin-bottom: 1px; }
.app { width: 38px; height: 38px; margin: 0 3px; display: flex; align-items: center; justify-content: center; border-radius: 4px; position: relative; }
.app svg { width: 24px; height: 24px; }
.run::after, .current::after { content: ""; position: absolute; bottom: 0; left: 16px; width: 6px; height: 3px; border-radius: 2px; background: #7d828b; }
.current { background: #edf1fb; box-shadow: 0 0 0 1px #e3e8f5; }
.current::after { left: 11px; width: 16px; background: #0078d4; }
.tray { display: grid; grid-template-columns: 32px 32px 32px 32px 24px 24px 24px; margin-left: auto; }
.tray svg { width: 16px; height: 16px; fill: none; stroke: #1d1d1d; stroke-width: 1.100; }
.clock { width: 71px; text-align: right; }
.clock span { display: block; line-height: 16px; letter-spacing: -0.2px; }
.badge { width: 16px; height: 16px; margin: 0 20px 0 7px; border-radius: 50%; background: #0067c0; color: #fff; font-size: 10px; line-height: 16px; text-align: center; }
```
